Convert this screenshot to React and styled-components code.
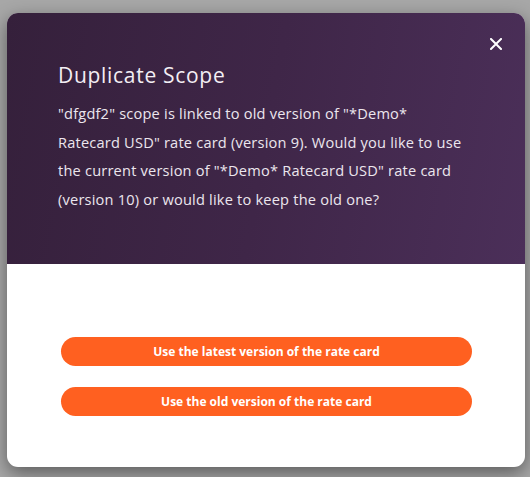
import React from "react";
import styled, { createGlobalStyle } from "styled-components";

const Global = createGlobalStyle`
  html, body { margin: 0; padding: 0; background: #a7a7a7; }
  body { font-family: "Open Sans", "Noto Sans", sans-serif; }
  #root { width: 530px; height: 477px; }
`;

const Backdrop = styled.div`
  width: 530px;
  height: 477px;
  box-sizing: border-box;
  padding: 13px 5px 10px 7px;
  display: flex;
`;

const Modal = styled.div`
  flex: 1;
  display: flex;
  flex-direction: column;
  border-radius: 11px;
  overflow: hidden;
  background: #fff;
  box-shadow: 0 6px 18px rgba(0, 0, 0, 0.45);
`;

const Header = styled.div`
  position: relative;
  height: 251px;
  box-sizing: border-box;
  padding: 49px 58px 0 51px;
  background: linear-gradient(100deg, #35203b 0%, #3f2648 50%, #4b2f59 100%);
  color: #f3eef4;
`;

const Title = styled.h2`
  margin: 0 0 11px;
  font-size: 21px;
  font-weight: 400;
  letter-spacing: 0.7px;
  line-height: 26px;
`;

const Message = styled.p`
  margin: 0;
  font-size: 14.6px;
  letter-spacing: 0.2px;
  line-height: 28.6px;
  color: #ece6ee;
`;

const Close = styled.button`
  position: absolute;
  top: 20px;
  right: 18px;
  width: 22px;
  height: 22px;
  padding: 0;
  border: none;
  background: transparent;
  cursor: pointer;
  display: flex;
  align-items: center;
  justify-content: center;
`;

const Body = styled.div`
  flex: 1;
  display: flex;
  flex-direction: column;
  gap: 21px;
  padding: 73px 53px 0 54px;
`;

const Action = styled.button`
  height: 29px;
  border: none;
  border-radius: 15px;
  background: #ff6020;
  color: #fff;
  font-family: "Open Sans", "Noto Sans", sans-serif;
  font-weight: 700;
  font-size: 12px;
  cursor: pointer;
`;

export default function App() {
  return (
    <>
      <Global />
      <Backdrop>
        <Modal>
          <Header>
            <Close aria-label="Close">
              <svg width="12" height="12" viewBox="0 0 12 12">
                <path d="M1 1 L11 11 M11 1 L1 11" stroke="#fff" strokeWidth="2" strokeLinecap="square" />
              </svg>
            </Close>
            <Title>Duplicate Scope</Title>
            <Message>
              "dfgdf2" scope is linked to old version of "*Demo* Ratecard USD" rate card (version 9). Would you
              like to use the current version of "*Demo* Ratecard USD" rate card (version 10) or would like to
              keep the old one?
            </Message>
          </Header>
          <Body>
            <Action>Use the latest version of the rate card</Action>
            <Action>Use the old version of the rate card</Action>
          </Body>
        </Modal>
      </Backdrop>
    </>
  );
}
